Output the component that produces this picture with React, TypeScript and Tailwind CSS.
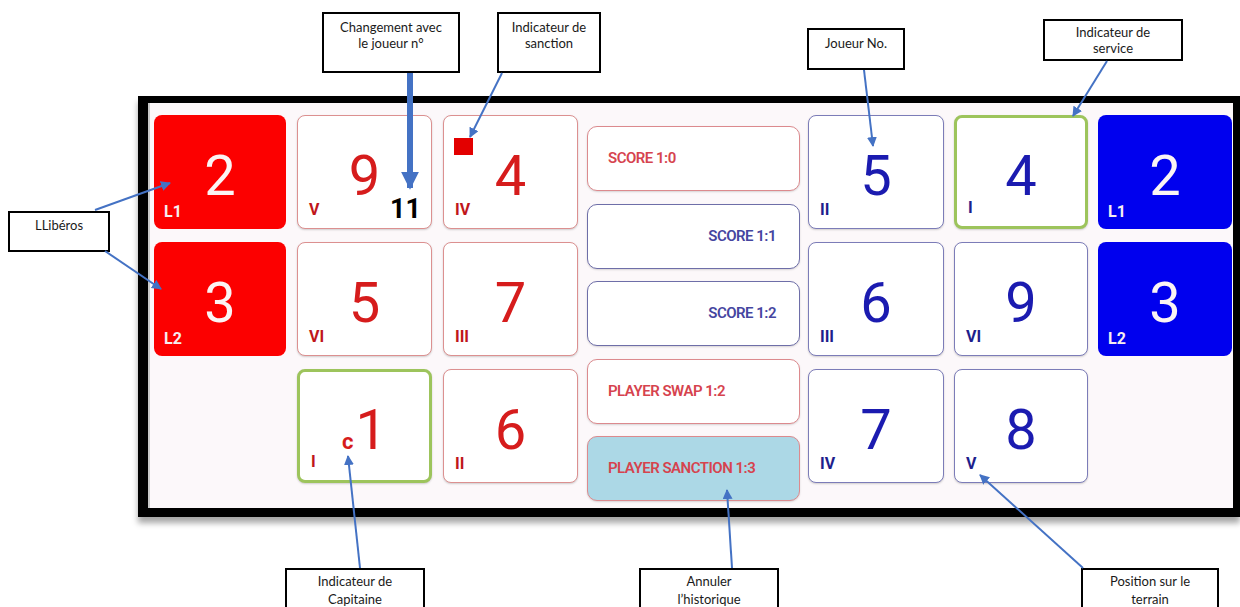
import type { ReactNode } from "react"

type Side = "red" | "blue"

interface Player {
  num: string
  pos: string
  side: Side
  serve?: boolean
  captain?: boolean
  sanction?: boolean
  swap?: string
}

const numColor: Record<Side, string> = {
  red: "text-[#d61c1c]",
  blue: "text-[#1b1bb0]",
}

const posColor: Record<Side, string> = {
  red: "text-[#c0161b]",
  blue: "text-[#1e1e8c]",
}

const cardBorder: Record<Side, string> = {
  red: "border border-[#dc9090]",
  blue: "border border-[#7c7cb8]",
}

function PlayerCard({ p }: { p: Player }) {
  const border = p.serve || p.captain ? "border-[3px] border-[#9dc45c]" : cardBorder[p.side]
  return (
    <div
      className={`relative flex items-center justify-center rounded-[8px] bg-white pt-[8px] shadow-[0_1px_2px_rgba(0,0,0,0.18)] ${border}`}
    >
      {p.sanction && <div className="absolute left-[10px] top-[22px] h-[17px] w-[19px] bg-[#e30000]" />}
      <span className={`text-[56px] leading-none ${numColor[p.side]}`}>
        {p.captain && <span className="mr-[2px] text-[22px] font-bold">c</span>}
        {p.num}
      </span>
      <span className={`absolute bottom-[10px] left-[11px] text-[16px] font-bold leading-none ${posColor[p.side]}`}>
        {p.pos}
      </span>
      {p.swap && (
        <span className="absolute bottom-[5px] right-[10px] text-[27px] font-bold leading-none text-black">{p.swap}</span>
      )}
    </div>
  )
}

function LiberoCard({ num, label, side }: { num: string; label: string; side: Side }) {
  const bg = side === "red" ? "bg-[#fc0000]" : "bg-[#0000ee]"
  return (
    <div className={`relative flex items-center justify-center rounded-[8px] pt-[8px] ${bg}`}>
      <span className="text-[56px] leading-none text-[#fbf4f4]">{num}</span>
      <span className="absolute bottom-[9px] left-[10px] text-[16px] font-bold leading-none text-[#f6eef0]">{label}</span>
    </div>
  )
}

interface HistoryItem {
  text: string
  side: Side
  active?: boolean
}

const history: HistoryItem[] = [
  { text: "SCORE 1:0", side: "red" },
  { text: "SCORE 1:1", side: "blue" },
  { text: "SCORE 1:2", side: "blue" },
  { text: "PLAYER SWAP 1:2", side: "red" },
  { text: "PLAYER SANCTION 1:3", side: "red", active: true },
]

function HistoryRow({ item }: { item: HistoryItem }) {
  const isRed = item.side === "red"
  return (
    <div
      className={`flex h-[65px] items-center rounded-[10px] border shadow-[0_1px_2px_rgba(0,0,0,0.15)] ${
        isRed ? "justify-start border-[#dc8a8e] pl-[20px]" : "justify-end border-[#6e6ea8] pr-[23px]"
      } ${item.active ? "bg-[#acd8e6]" : "bg-white"}`}
    >
      <span
        className={`text-[15px] font-semibold tracking-[-0.5px] ${isRed ? "text-[#d6434e]" : "text-[#45459f]"}`}
      >
        {item.text}
      </span>
    </div>
  )
}

function Callout({ className, children }: { className: string; children: ReactNode }) {
  return (
    <div
      className={`absolute border-2 border-black bg-white text-center text-[#1a1a1a] ${className}`}
      style={{ fontFamily: "Lato, 'Open Sans', sans-serif" }}
    >
      {children}
    </div>
  )
}

export default function App() {
  const left: Player[] = [
    { num: "9", pos: "V", side: "red", swap: "11" },
    { num: "4", pos: "IV", side: "red", sanction: true },
    { num: "5", pos: "VI", side: "red" },
    { num: "7", pos: "III", side: "red" },
    { num: "1", pos: "I", side: "red", captain: true },
    { num: "6", pos: "II", side: "red" },
  ]
  const right: Player[] = [
    { num: "5", pos: "II", side: "blue" },
    { num: "4", pos: "I", side: "blue", serve: true },
    { num: "6", pos: "III", side: "blue" },
    { num: "9", pos: "VI", side: "blue" },
    { num: "7", pos: "IV", side: "blue" },
    { num: "8", pos: "V", side: "blue" },
  ]

  return (
    <div
      className="relative h-[607px] w-[1240px] overflow-hidden bg-white"
      style={{ fontFamily: "Roboto, 'Liberation Sans', sans-serif" }}
    >
      <div className="ml-[138px] mt-[96px] h-[421px] w-[1102px] border-b-[9px] border-l-[10px] border-r-[7px] border-t-[7px] border-black bg-[#fcf8fa] shadow-[0_6px_6px_rgba(0,0,0,0.35)]">
        <div className="flex h-full border-l-2 border-[#c9c9c9] pl-[4px] pt-[12px]">
          <div className="grid grid-cols-[132px_135px_135px] grid-rows-[114px_114px_114px] gap-x-[11px] gap-y-[13px]">
            <LiberoCard num="2" label="L1" side="red" />
            <PlayerCard p={left[0]} />
            <PlayerCard p={left[1]} />
            <LiberoCard num="3" label="L2" side="red" />
            <PlayerCard p={left[2]} />
            <PlayerCard p={left[3]} />
            <div />
            <PlayerCard p={left[4]} />
            <PlayerCard p={left[5]} />
          </div>

          <div className="ml-[9px] flex w-[213px] flex-col gap-[12.5px] pt-[11px]">
            {history.map((h) => (
              <HistoryRow key={h.text} item={h} />
            ))}
          </div>

          <div className="ml-[8px] grid grid-cols-[136px_134px_134px] grid-rows-[114px_114px_114px] gap-x-[10px] gap-y-[13px]">
            <PlayerCard p={right[0]} />
            <PlayerCard p={right[1]} />
            <LiberoCard num="2" label="L1" side="blue" />
            <PlayerCard p={right[2]} />
            <PlayerCard p={right[3]} />
            <LiberoCard num="3" label="L2" side="blue" />
            <PlayerCard p={right[4]} />
            <PlayerCard p={right[5]} />
            <div />
          </div>
        </div>
      </div>

      {/* annotations */}
      <Callout className="left-[322px] top-[12px] h-[61px] w-[138px] pt-[5px] text-[13px] leading-[16px]">
        Changement avec
        <br />
        le joueur n°
      </Callout>
      <Callout className="left-[497px] top-[12px] h-[61px] w-[104px] pt-[5px] text-[13px] leading-[16px]">
        Indicateur de
        <br />
        sanction
      </Callout>
      <Callout className="left-[807px] top-[28px] h-[42px] w-[98px] pt-[5px] text-[13px] leading-[16px]">
        Joueur No.
      </Callout>
      <Callout className="left-[1043px] top-[19px] h-[42px] w-[140px] pt-[3px] text-[13px] leading-[16px]">
        Indicateur de
        <br />
        service
      </Callout>
      <Callout className="left-[8px] top-[211px] h-[41px] w-[102px] pt-[4px] text-[13px] leading-[16px]">
        LLibéros
      </Callout>
      <Callout className="left-[285px] top-[568px] h-[50px] w-[140px] pt-[2px] text-[13px] leading-[18px]">
        Indicateur de
        <br />
        Capitaine
      </Callout>
      <Callout className="left-[639px] top-[568px] h-[50px] w-[140px] pt-[2px] text-[13px] leading-[18px]">
        Annuler
        <br />
        l’historique
      </Callout>
      <Callout className="left-[1081px] top-[568px] h-[50px] w-[138px] pt-[2px] text-[13px] leading-[18px]">
        Position sur le
        <br />
        terrain
      </Callout>

      <svg className="pointer-events-none absolute left-0 top-0" width="1240" height="607">
        <defs>
          <marker id="ah" viewBox="0 0 10 10" refX="9" refY="5" markerWidth="5" markerHeight="5" orient="auto">
            <path d="M0 0 L10 5 L0 10 z" fill="#4472c4" />
          </marker>
          <marker id="ahb" viewBox="0 0 10 10" refX="9" refY="5" markerWidth="3" markerHeight="3" orient="auto">
            <path d="M0 0 L10 5 L0 10 z" fill="#4472c4" />
          </marker>
        </defs>
        <g stroke="#4472c4" fill="none">
          <line x1="410" y1="73" x2="410" y2="188" strokeWidth="6" markerEnd="url(#ahb)" />
          <line x1="502" y1="73" x2="470" y2="137" strokeWidth="2" markerEnd="url(#ah)" />
          <line x1="864" y1="70" x2="873" y2="146" strokeWidth="2" markerEnd="url(#ah)" />
          <line x1="1107" y1="61" x2="1073" y2="116" strokeWidth="2" markerEnd="url(#ah)" />
          <line x1="95" y1="210" x2="170" y2="183" strokeWidth="2" markerEnd="url(#ah)" />
          <line x1="105" y1="251" x2="161" y2="289" strokeWidth="2" markerEnd="url(#ah)" />
          <line x1="360" y1="568" x2="348" y2="456" strokeWidth="2" markerEnd="url(#ah)" />
          <line x1="732" y1="568" x2="727" y2="490" strokeWidth="2" markerEnd="url(#ah)" />
          <line x1="1083" y1="568" x2="980" y2="475" strokeWidth="2" markerEnd="url(#ah)" />
        </g>
      </svg>
    </div>
  )
}
